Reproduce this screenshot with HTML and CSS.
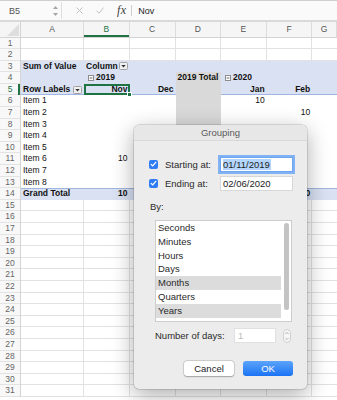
FILE: index.html
```html
<!DOCTYPE html>
<html>
<head>
<meta charset="utf-8">
<link rel="stylesheet" href="styles.css">
</head>
<body>
<div class="app">
  <div class="fbar">
    <div class="namebox">
      <span>B5</span>
      <svg class="nb-arrows" width="5" height="12" viewBox="0 0 5 12"><polygon points="0,4 2.5,1 5,4" fill="#a5a5a5"/><polygon points="0,8 2.5,11 5,8" fill="#a5a5a5"/></svg>
    </div>
    <svg class="fb-x" width="7" height="7" viewBox="0 0 7 7"><path d="M0.5 0.5L6.5 6.5M6.5 0.5L0.5 6.5" stroke="#c2c2c2" stroke-width="1"/></svg>
    <svg class="fb-ok" width="8" height="7" viewBox="0 0 8 7"><path d="M0.5 3.8L3 6.2L7.5 0.6" stroke="#c2c2c2" stroke-width="1" fill="none"/></svg>
    <i class="fx">fx</i>
    <span class="fb-sep"></span>
    <span class="fb-val">Nov</span>
  </div>

  <div class="sheet">
    <div class="row hdr">
      <div class="corner"><svg width="12" height="12" viewBox="0 0 12 12"><polygon points="12,0 12,12 0,12" fill="#dedede"/></svg></div>
      <div class="ch">A</div><div class="ch csel">B</div><div class="ch">C</div><div class="ch">D</div><div class="ch">E</div><div class="ch">F</div><div class="ch">G</div>
    </div>
    <div class="row grid"><div class="rh">1</div></div>
    <div class="row grid"><div class="rh">2</div></div>
    <div class="row band">
      <div class="rh">3</div>
      <div class="c cA b">Sum of Value</div>
      <div class="c cB b filt tight"><span>Column</span><svg class="dd" width="9" height="8" viewBox="0 0 9 8"><rect x="0.5" y="0.5" width="8" height="7" rx="1" fill="#efefef" stroke="#a3a3a3"/><polygon points="2.3,3 6.7,3 4.5,5.6" fill="#333"/></svg></div>
    </div>
    <div class="row band">
      <div class="rh">4</div>
      <div class="c cB b"><svg class="tog" width="6" height="6" viewBox="0 0 6 6"><rect x="0.5" y="0.5" width="5" height="5" fill="#fff" stroke="#8d8d8d"/><path d="M1.6 3H4.4" stroke="#555" stroke-width="0.9"/></svg>2019</div>
      <div class="c cD b gray">2019 Total</div>
      <div class="c cE b"><svg class="tog" width="6" height="6" viewBox="0 0 6 6"><rect x="0.5" y="0.5" width="5" height="5" fill="#fff" stroke="#8d8d8d"/><path d="M1.6 3H4.4" stroke="#555" stroke-width="0.9"/></svg>2020</div>
    </div>
    <div class="row band r5">
      <div class="rh act">5</div>
      <div class="c cA b filt"><span>Row Labels</span><svg class="dd" width="9" height="8" viewBox="0 0 9 8"><rect x="0.5" y="0.5" width="8" height="7" rx="1" fill="#efefef" stroke="#a3a3a3"/><polygon points="2.3,3 6.7,3 4.5,5.6" fill="#333"/></svg></div>
      <div class="c cB b r selc">Nov</div>
      <div class="c cC b r">Dec</div>
      <div class="c cD gray"></div>
      <div class="c cE b r">Jan</div>
      <div class="c cF b r">Feb</div>
    </div>
    <div class="row"><div class="rh">6</div><div class="c cA">Item 1</div><div class="c cD gray"></div><div class="c cE r">10</div></div>
    <div class="row"><div class="rh">7</div><div class="c cA">Item 2</div><div class="c cD gray"></div><div class="c cF r">10</div></div>
    <div class="row"><div class="rh">8</div><div class="c cA">Item 3</div><div class="c cD gray"></div></div>
    <div class="row"><div class="rh">9</div><div class="c cA">Item 4</div><div class="c cD gray"></div></div>
    <div class="row"><div class="rh">10</div><div class="c cA">Item 5</div><div class="c cD gray"></div></div>
    <div class="row"><div class="rh">11</div><div class="c cA">Item 6</div><div class="c cB r">10</div><div class="c cD gray"></div></div>
    <div class="row"><div class="rh">12</div><div class="c cA">Item 7</div><div class="c cD gray"></div></div>
    <div class="row"><div class="rh">13</div><div class="c cA">Item 8</div><div class="c cD gray"></div></div>
    <div class="row band total">
      <div class="rh">14</div>
      <div class="c cA b">Grand Total</div>
      <div class="c cB b r">10</div>
      <div class="c cE b r">10</div>
      <div class="c cF b r">10</div>
    </div>
    <div class="row grid"><div class="rh">15</div></div>
    <div class="row grid"><div class="rh">16</div></div>
    <div class="row grid"><div class="rh">17</div></div>
    <div class="row grid"><div class="rh">18</div></div>
    <div class="row grid"><div class="rh">19</div></div>
    <div class="row grid"><div class="rh">20</div></div>
    <div class="row grid"><div class="rh">21</div></div>
    <div class="row grid"><div class="rh">22</div></div>
    <div class="row grid"><div class="rh">23</div></div>
    <div class="row grid"><div class="rh">24</div></div>
    <div class="row grid"><div class="rh">25</div></div>
    <div class="row grid"><div class="rh">26</div></div>
    <div class="row grid"><div class="rh">27</div></div>
    <div class="row grid"><div class="rh">28</div></div>
    <div class="row grid"><div class="rh">29</div></div>
    <div class="row grid"><div class="rh">30</div></div>
    <div class="row grid"><div class="rh">31</div></div>
  </div>

  <div class="dialog">
    <div class="dtitle">Grouping</div>
    <div class="dbody">
      <div class="drow">
        <span class="chk"><svg width="7" height="6" viewBox="0 0 7 6"><path d="M0.8 3.1L2.7 4.9L6.2 0.9" stroke="#fff" stroke-width="1.3" fill="none"/></svg></span>
        <span class="dlabel">Starting at:</span>
        <span class="inp focus"><span class="selt">01/11/2019</span></span>
      </div>
      <div class="drow">
        <span class="chk"><svg width="7" height="6" viewBox="0 0 7 6"><path d="M0.8 3.1L2.7 4.9L6.2 0.9" stroke="#fff" stroke-width="1.3" fill="none"/></svg></span>
        <span class="dlabel">Ending at:</span>
        <span class="inp">02/06/2020</span>
      </div>
      <div class="by">By:</div>
      <div class="list">
        <div class="items">
          <div class="item">Seconds</div>
          <div class="item">Minutes</div>
          <div class="item">Hours</div>
          <div class="item">Days</div>
          <div class="item hl">Months</div>
          <div class="item">Quarters</div>
          <div class="item hl">Years</div>
        </div>
        <div class="sb"><div class="thumb"></div></div>
      </div>
      <div class="nrow">
        <span class="nlabel">Number of days:</span>
        <span class="ninp">1</span>
        <span class="stepper"><svg width="8" height="14" viewBox="0 0 8 14"><rect x="0.5" y="0.5" width="7" height="13" rx="3.5" fill="#f6f6f6" stroke="#d0d0d0"/><path d="M2.4 5L4 3.4L5.6 5M2.4 9L4 10.6L5.6 9" stroke="#9a9a9a" stroke-width="0.8" fill="none"/></svg></span>
      </div>
      <div class="btns">
        <span class="btn cancel">Cancel</span>
        <span class="btn ok">OK</span>
      </div>
    </div>
  </div>
</div>
</body>
</html>
```

FILE: styles.css
```css
html, body {
  margin: 0;
  padding: 0;
  background: #fff;
}
body {
  font-family: "Liberation Sans", Arial, sans-serif;
}
.app {
  position: relative;
  width: 337px;
  height: 400px;
  overflow: hidden;
  background: #fff;
}

/* formula bar */
.fbar {
  display: flex;
  align-items: center;
  height: 19px;
  border-top: 1px solid #cfcfcf;
  border-bottom: 2px solid #d9d9d9;
  background: #fafafa;
  font-size: 9px;
}
.namebox {
  width: 62px;
  height: 17px;
  box-sizing: border-box;
  display: flex;
  align-items: center;
  justify-content: space-between;
  padding: 0 3px 0 9px;
  border-right: 1px solid #dedede;
  color: #555;
}
.fb-x { margin-left: 14px; }
.fb-ok { margin-left: 13px; }
.fx {
  margin-left: 13px;
  font-family: "Liberation Serif", "Times New Roman", serif;
  font-size: 12px;
  color: #3a3a3a;
  letter-spacing: 0.3px;
}
.fb-sep {
  width: 1px;
  height: 11px;
  background: #cfcfcf;
  margin-left: 5px;
}
.fb-val {
  margin-left: 6px;
  color: #222;
  font-size: 9px;
}

/* sheet */
.sheet {
  display: flex;
  flex-direction: column;
}
.row {
  display: grid;
  grid-template-columns: 21px 63px 45.5px 46px 45.5px 45.7px 45.6px 1fr;
  height: 11.6px;
  font-size: 8.5px;
  line-height: 11.6px;
  color: #111;
}
.hdr {
  height: 15.5px;
  box-sizing: border-box;
  background: #f5f5f5;
  border-bottom: 1px solid #d4d4d4;
  line-height: 14.5px;
}
.corner {
  border-right: 1px solid #d4d4d4;
  display: flex;
  justify-content: flex-end;
  align-items: flex-end;
  padding: 0 1px 1px 0;
}
.ch {
  border-right: 1px solid #dcdcdc;
  text-align: center;
  font-size: 8.5px;
  color: #555;
}
.ch.csel {
  color: #217346;
  box-shadow: inset 0 -2px 0 #217346;
}
.rh {
  grid-column: 1;
  background: #f8f8f8;
  border-right: 1px solid #d4d4d4;
  box-shadow: inset 0 -1px 0 #e3e3e3;
  text-align: center;
  color: #666;
  font-size: 8.5px;
}
.rh.act {
  color: #217346;
  box-shadow: inset -2px 0 0 #217346, inset 0 -1px 0 #e3e3e3;
}
.grid {
  background:
    linear-gradient(#e2e2e2, #e2e2e2) 83px 0 / 1px 100% no-repeat,
    linear-gradient(#e2e2e2, #e2e2e2) 128.5px 0 / 1px 100% no-repeat,
    linear-gradient(#e2e2e2, #e2e2e2) 174.5px 0 / 1px 100% no-repeat,
    linear-gradient(#e2e2e2, #e2e2e2) 220px 0 / 1px 100% no-repeat,
    linear-gradient(#e2e2e2, #e2e2e2) 265.7px 0 / 1px 100% no-repeat,
    linear-gradient(#e2e2e2, #e2e2e2) 311.3px 0 / 1px 100% no-repeat,
    linear-gradient(#e2e2e2, #e2e2e2) 0 100% / 100% 1px no-repeat,
    #fff;
}
.band {
  background: #d9e1f2;
}
.r5 {
  background: linear-gradient(#9fb6e0, #9fb6e0) 0 100% / 100% 1px no-repeat, #d9e1f2;
}
.total {
  background: linear-gradient(#9fb6e0, #9fb6e0) 0 0 / 100% 1px no-repeat, #d9e1f2;
}
.c {
  padding: 0 2px;
  white-space: nowrap;
  overflow: hidden;
  min-width: 0;
}
.cA { grid-column: 2; }
.cB { grid-column: 3; }
.cC { grid-column: 4; }
.cD { grid-column: 5; }
.cE { grid-column: 6; }
.cF { grid-column: 7; }
.b { font-weight: bold; }
.r { text-align: right; }
.gray { background: #d9d9d9; }
.filt {
  display: flex;
  align-items: center;
  gap: 3px;
}
.filt.tight {
  gap: 1px;
  padding-right: 1px;
}
.dd {
  flex-shrink: 0;
}
.tog {
  margin: 0 2px 0 2px;
  vertical-align: -0.5px;
}
.selc {
  position: relative;
  overflow: visible;
  outline: 2px solid #1f7244;
  outline-offset: -2px;
}
.selc::after {
  content: "";
  position: absolute;
  right: -2px;
  bottom: -2px;
  width: 3px;
  height: 3px;
  background: #1f7244;
  border: 1px solid #fff;
}

/* dialog */
.dialog {
  position: absolute;
  left: 134px;
  top: 125px;
  width: 173px;
  height: 264px;
  box-sizing: border-box;
  background: #ececec;
  border-radius: 5px;
  box-shadow: 0 0 0 0.5px rgba(0, 0, 0, 0.22), 0 6px 22px rgba(0, 0, 0, 0.33);
  font-size: 9.5px;
  color: #2a2a2a;
  display: flex;
  flex-direction: column;
}
.dtitle {
  height: 16px;
  line-height: 16px;
  box-sizing: border-box;
  text-align: center;
  color: #5a5a5a;
  background: #e7e7e7;
  border-bottom: 1px solid #d9d9d9;
  border-radius: 5px 5px 0 0;
}
.dbody {
  display: flex;
  flex-direction: column;
  padding: 15px 14px 0 15px;
}
.drow {
  display: flex;
  align-items: center;
  height: 16px;
}
.drow + .drow {
  margin-top: 3px;
}
.chk {
  width: 9px;
  height: 9px;
  border-radius: 2px;
  background: #2e7cf6;
  display: flex;
  align-items: center;
  justify-content: center;
  margin-right: 7px;
}
.dlabel {
  width: 55px;
}
.inp {
  width: 73px;
  height: 15px;
  box-sizing: border-box;
  background: #fff;
  border: 1px solid #d7d7d7;
  padding-left: 2px;
  line-height: 13px;
  color: #222;
}
.inp.focus {
  outline: 2px solid #80b2f4;
  border-color: #6ea5f0;
}
.selt {
  background: #b4d6fe;
  padding: 0 1px 0 0;
}
.by {
  margin-top: 10px;
  height: 12px;
  line-height: 12px;
  padding-left: 1px;
}
.list {
  margin: 7px 0 0 6px;
  width: 137px;
  height: 102px;
  box-sizing: border-box;
  background: #fff;
  border: 1px solid #cdcdcd;
  display: flex;
}
.items {
  flex: 1;
}
.item {
  height: 13.8px;
  line-height: 13.8px;
  padding-left: 2px;
}
.item.hl {
  background: #dcdcdc;
}
.sb {
  width: 10px;
  padding-top: 2px;
  box-sizing: border-box;
  display: flex;
  justify-content: center;
}
.thumb {
  width: 5px;
  height: 87px;
  border-radius: 3px;
  background: #c3c3c3;
}
.nrow {
  margin: 6px 0 0 6px;
  display: flex;
  align-items: center;
  height: 15px;
}
.nlabel {
  width: 79px;
}
.ninp {
  width: 42px;
  height: 15px;
  box-sizing: border-box;
  background: #fff;
  border: 1px solid #e0e0e0;
  padding-left: 3px;
  line-height: 13px;
  color: #bbb;
}
.stepper {
  margin-left: 7px;
  display: flex;
}
.btns {
  margin-top: 18px;
  display: flex;
  justify-content: flex-end;
  gap: 9px;
}
.btn {
  width: 50px;
  height: 15px;
  line-height: 15px;
  border-radius: 3px;
  text-align: center;
}
.cancel {
  background: #fff;
  color: #222;
  box-shadow: 0 0 0 0.5px rgba(0, 0, 0, 0.18), 0 0.5px 1.5px rgba(0, 0, 0, 0.25);
}
.ok {
  background: linear-gradient(#5ca4fb, #1b73f5);
  color: #fff;
}
```
